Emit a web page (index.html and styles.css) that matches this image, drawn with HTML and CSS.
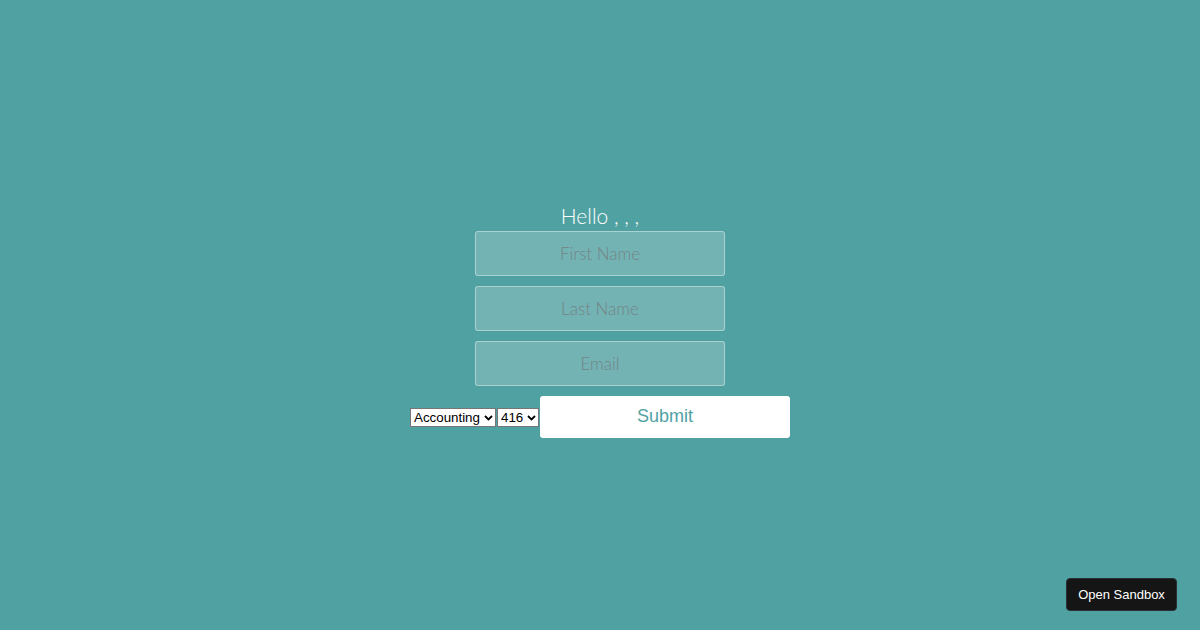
FILE: index.html
```html
<!DOCTYPE html>
<html>
<head>
<meta charset="utf-8">
<link rel="stylesheet" href="styles.css">
</head>
<body>
<div class="page">
  <form class="form">
    <h1 class="title">Hello , , ,</h1>
    <input class="field" type="text" placeholder="First Name">
    <input class="field" type="text" placeholder="Last Name">
    <input class="field" type="text" placeholder="Email">
    <div class="row">
      <select class="sel sel-dept"><option>Accounting</option></select><select class="sel sel-num"><option>416</option></select><button class="submit" type="button">Submit</button>
    </div>
  </form>
</div>
<button class="sandbox" type="button">Open Sandbox</button>
</body>
</html>
```
FILE: styles.css
```css
html, body {
  margin: 0;
  height: 100%;
}
body {
  background: #50a1a2;
  font-family: "Lato", "Liberation Sans", sans-serif;
}
.page {
  height: 630px;
  display: flex;
  align-items: center;
  justify-content: center;
}
.form {
  display: flex;
  flex-direction: column;
  align-items: center;
  margin-top: 12px;
}
.title {
  margin: 0 0 4px 0;
  font-family: "Lato", sans-serif;
  font-weight: 300;
  font-size: 21px;
  line-height: 22px;
  color: #ffffff;
}
.field {
  box-sizing: border-box;
  width: 250px;
  height: 45px;
  margin: 0 0 10px 0;
  padding: 10px 15px;
  border: 1px solid rgba(255,255,255,0.4);
  background: rgba(255,255,255,0.2);
  border-radius: 3px;
  text-align: center;
  font-family: "Lato", sans-serif;
  font-weight: 300;
  font-size: 17px;
  color: #ffffff;
  outline: none;
}
.field::placeholder {
  color: #738484;
}
.row {
  display: block;
  text-align: center;
  white-space: nowrap;
}
.sel {
  -webkit-appearance: none;
  appearance: none;
  box-sizing: border-box;
  height: 19px;
  padding: 0 12px 0 3px;
  border: 1px solid #767676;
  border-radius: 0;
  color: #000000;
  background-color: #ffffff;
  background-image: url("data:image/svg+xml,%3Csvg xmlns='http://www.w3.org/2000/svg' width='9' height='6' viewBox='0 0 9 6'%3E%3Cpath d='M1 1l3.5 3.5L8 1' fill='none' stroke='%23000' stroke-width='1.8'/%3E%3C/svg%3E");
  background-repeat: no-repeat;
  background-position: right 2px center;
  font-family: "Liberation Sans", Arial, sans-serif;
  font-size: 13.333px;
  vertical-align: baseline;
  margin: 0 1px 0 0;
}
.sel-dept {
  width: 86px;
}
.sel-num {
  width: 42px;
}
.submit {
  box-sizing: border-box;
  width: 250px;
  height: 42px;
  margin: 0;
  border: 0;
  border-radius: 3px;
  background: #ffffff;
  color: #50a1a2;
  font-family: "Liberation Sans", Arial, sans-serif;
  font-size: 18px;
  vertical-align: baseline;
}
.sandbox {
  position: fixed;
  right: 23px;
  bottom: 19px;
  width: 111px;
  height: 33px;
  background: #151515;
  color: #ffffff;
  border: 1px solid #2a2f36;
  border-radius: 4px;
  font-family: "Liberation Sans", Arial, sans-serif;
  font-size: 13px;
  padding: 0;
}
```
